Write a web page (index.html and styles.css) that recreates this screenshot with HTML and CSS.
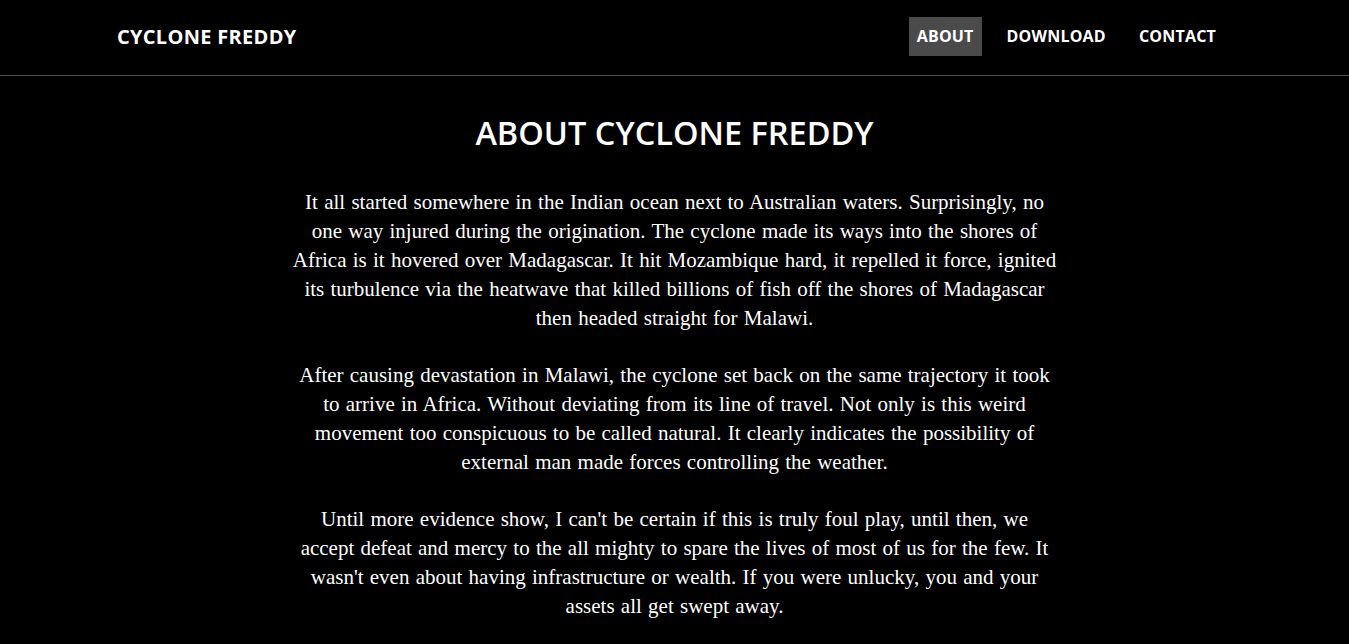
FILE: index.html
```html
<!DOCTYPE html>
<html lang="en">
<head>
<meta charset="utf-8">
<title>Cyclone Freddy</title>
<link rel="stylesheet" href="styles.css">
</head>
<body>
<header class="site-header">
  <div class="header-inner">
    <a class="brand" href="#">CYCLONE FREDDY</a>
    <nav class="nav">
      <a class="nav-link active" href="#">ABOUT</a>
      <a class="nav-link" href="#">DOWNLOAD</a>
      <a class="nav-link" href="#">CONTACT</a>
    </nav>
  </div>
</header>
<main class="content">
  <h1 class="title">ABOUT CYCLONE FREDDY</h1>
  <p class="para">It all started somewhere in the Indian ocean next to Australian waters. Surprisingly, no one way injured during the origination. The cyclone made its ways into the shores of Africa is it hovered over Madagascar. It hit Mozambique hard, it repelled it force, ignited its turbulence via the heatwave that killed billions of fish off the shores of Madagascar then headed straight for Malawi.</p>
  <p class="para">After causing devastation in Malawi, the cyclone set back on the same trajectory it took to arrive in Africa. Without deviating from its line of travel. Not only is this weird movement too conspicuous to be called natural. It clearly indicates the possibility of external man made forces controlling the weather.</p>
  <p class="para">Until more evidence show, I can't be certain if this is truly foul play, until then, we accept defeat and mercy to the all mighty to spare the lives of most of us for the few. It wasn't even about having infrastructure or wealth. If you were unlucky, you and your assets all get swept away.</p>
</main>
</body>
</html>
```
FILE: styles.css
```css
html, body {
  margin: 0;
  padding: 0;
  background: #000;
  color: #fff;
}

.site-header {
  height: 75px;
  border-bottom: 1px solid #4d4d4d;
}

.header-inner {
  height: 100%;
  box-sizing: border-box;
  display: flex;
  align-items: center;
  justify-content: space-between;
  padding: 0 125px 2px 117px;
}

.brand {
  font-family: "Open Sans", "Noto Sans", sans-serif;
  font-weight: 700;
  font-size: 20px;
  color: #fff;
  text-decoration: none;
  letter-spacing: 0.3px;
}

.nav {
  display: flex;
  gap: 17px;
}

.nav-link {
  font-family: "Open Sans", "Noto Sans", sans-serif;
  font-weight: 700;
  font-size: 16px;
  color: #fff;
  text-decoration: none;
  padding: 0 8px;
  height: 39px;
  line-height: 39px;
  letter-spacing: 0.2px;
}

.nav-link.active {
  background: #4a4a4a;
}

.content {
  max-width: 765px;
  margin: 0 auto;
  text-align: center;
  padding-top: 35px;
}

.title {
  font-family: "Open Sans", "Noto Sans", sans-serif;
  font-weight: 600;
  font-size: 32.5px;
  line-height: 44px;
  margin: 0 0 33px;
}

.para {
  font-family: "Liberation Serif", serif;
  font-size: 21px;
  line-height: 29px;
  word-spacing: 1px;
  margin: 0 0 28px;
}
```
